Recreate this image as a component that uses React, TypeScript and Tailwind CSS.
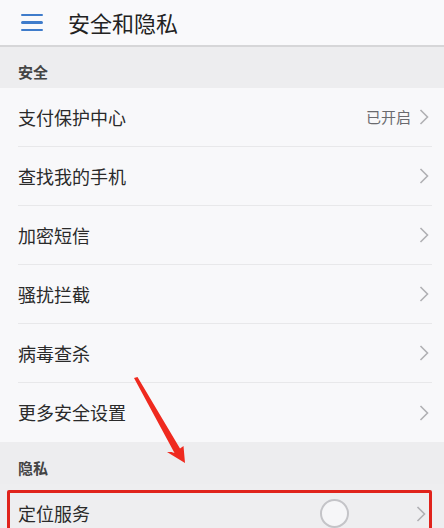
import React from 'react';

const font = { fontFamily: '"Noto Sans CJK SC", "Noto Sans", sans-serif' };

const Chevron: React.FC = () => (
    <svg width="10" height="18" viewBox="0 0 10 18" className="shrink-0">
        <path d="M1.5 2 L8.5 9 L1.5 16" fill="none" stroke="#b0b0b4" strokeWidth="1.6" />
    </svg>
);

interface RowProps {
    label: string;
    value?: string;
    last?: boolean;
}

const Row: React.FC<RowProps> = ({ label, value, last }) => (
    <div className="h-[59px] pl-[18px] bg-[#f8f8fa]">
        <div className={`h-full flex items-center pr-[3px] mr-[12px] ${last ? '' : 'border-b border-[#e8e8ea]'}`}>
            <span className="flex-1 text-[18px] text-[#2a2a2a]">{label}</span>
            {value && <span className="text-[15px] text-[#6a6a6e] mr-[8px]">{value}</span>}
            <Chevron />
        </div>
    </div>
);

const Section: React.FC<{ title: string; h: string }> = ({ title, h }) => (
    <div className={`${h} bg-[#ededef] flex items-center pl-[18px] pt-[10px]`}>
        <span className="text-[15px] font-semibold text-[#444]">{title}</span>
    </div>
);

const App: React.FC = () => {
    const security = ['支付保护中心', '查找我的手机', '加密短信', '骚扰拦截', '病毒查杀', '更多安全设置'];

    return (
        <div className="w-[444px] h-[528px] overflow-hidden relative bg-[#f8f8fa]" style={font}>
            {/* header */}
            <div className="h-[47px] flex items-center bg-[#f9f9fb] border-b-2 border-[#d6d6d8]">
                <div className="w-[22px] ml-[21px] flex flex-col gap-[5px]">
                    <span className="h-[2.5px] bg-[#3f7ccb] rounded"></span>
                    <span className="h-[2.5px] bg-[#3f7ccb] rounded"></span>
                    <span className="h-[2.5px] bg-[#3f7ccb] rounded"></span>
                </div>
                <span className="ml-[25px] text-[22px] text-[#222]">安全和隐私</span>
            </div>

            <Section title="安全" h="h-[41px]" />
            {security.map((s, i) => (
                <Row key={s} label={s} value={i === 0 ? '已开启' : undefined} last={i === security.length - 1} />
            ))}

            <Section title="隐私" h="h-[42px]" />
            <div className="h-[59px] pl-[18px] bg-[#eeeef0] flex items-center pr-[18px]">
                <span className="flex-1 text-[18px] text-[#2a2a2a]">定位服务</span>
                <span className="w-[29px] h-[29px] rounded-full border-2 border-[#c4c4c8] bg-[#f6f6f8] mr-[67px]"></span>
                <Chevron />
            </div>

            {/* red highlight box */}
            <div className="absolute left-[7px] top-[490px] w-[425px] h-[50px] border-[3px] border-[#e0231c] rounded-[2px]"></div>

            {/* red arrow */}
            <svg className="absolute left-0 top-0" width="444" height="528" viewBox="0 0 444 528">
                <polygon
                    points="134,378 137.5,377 180,448.5 183.5,446 185,463 167,452 171.5,452 174.5,453"
                    fill="#ef2a1f"
                />
            </svg>
        </div>
    );
};

export default App;
